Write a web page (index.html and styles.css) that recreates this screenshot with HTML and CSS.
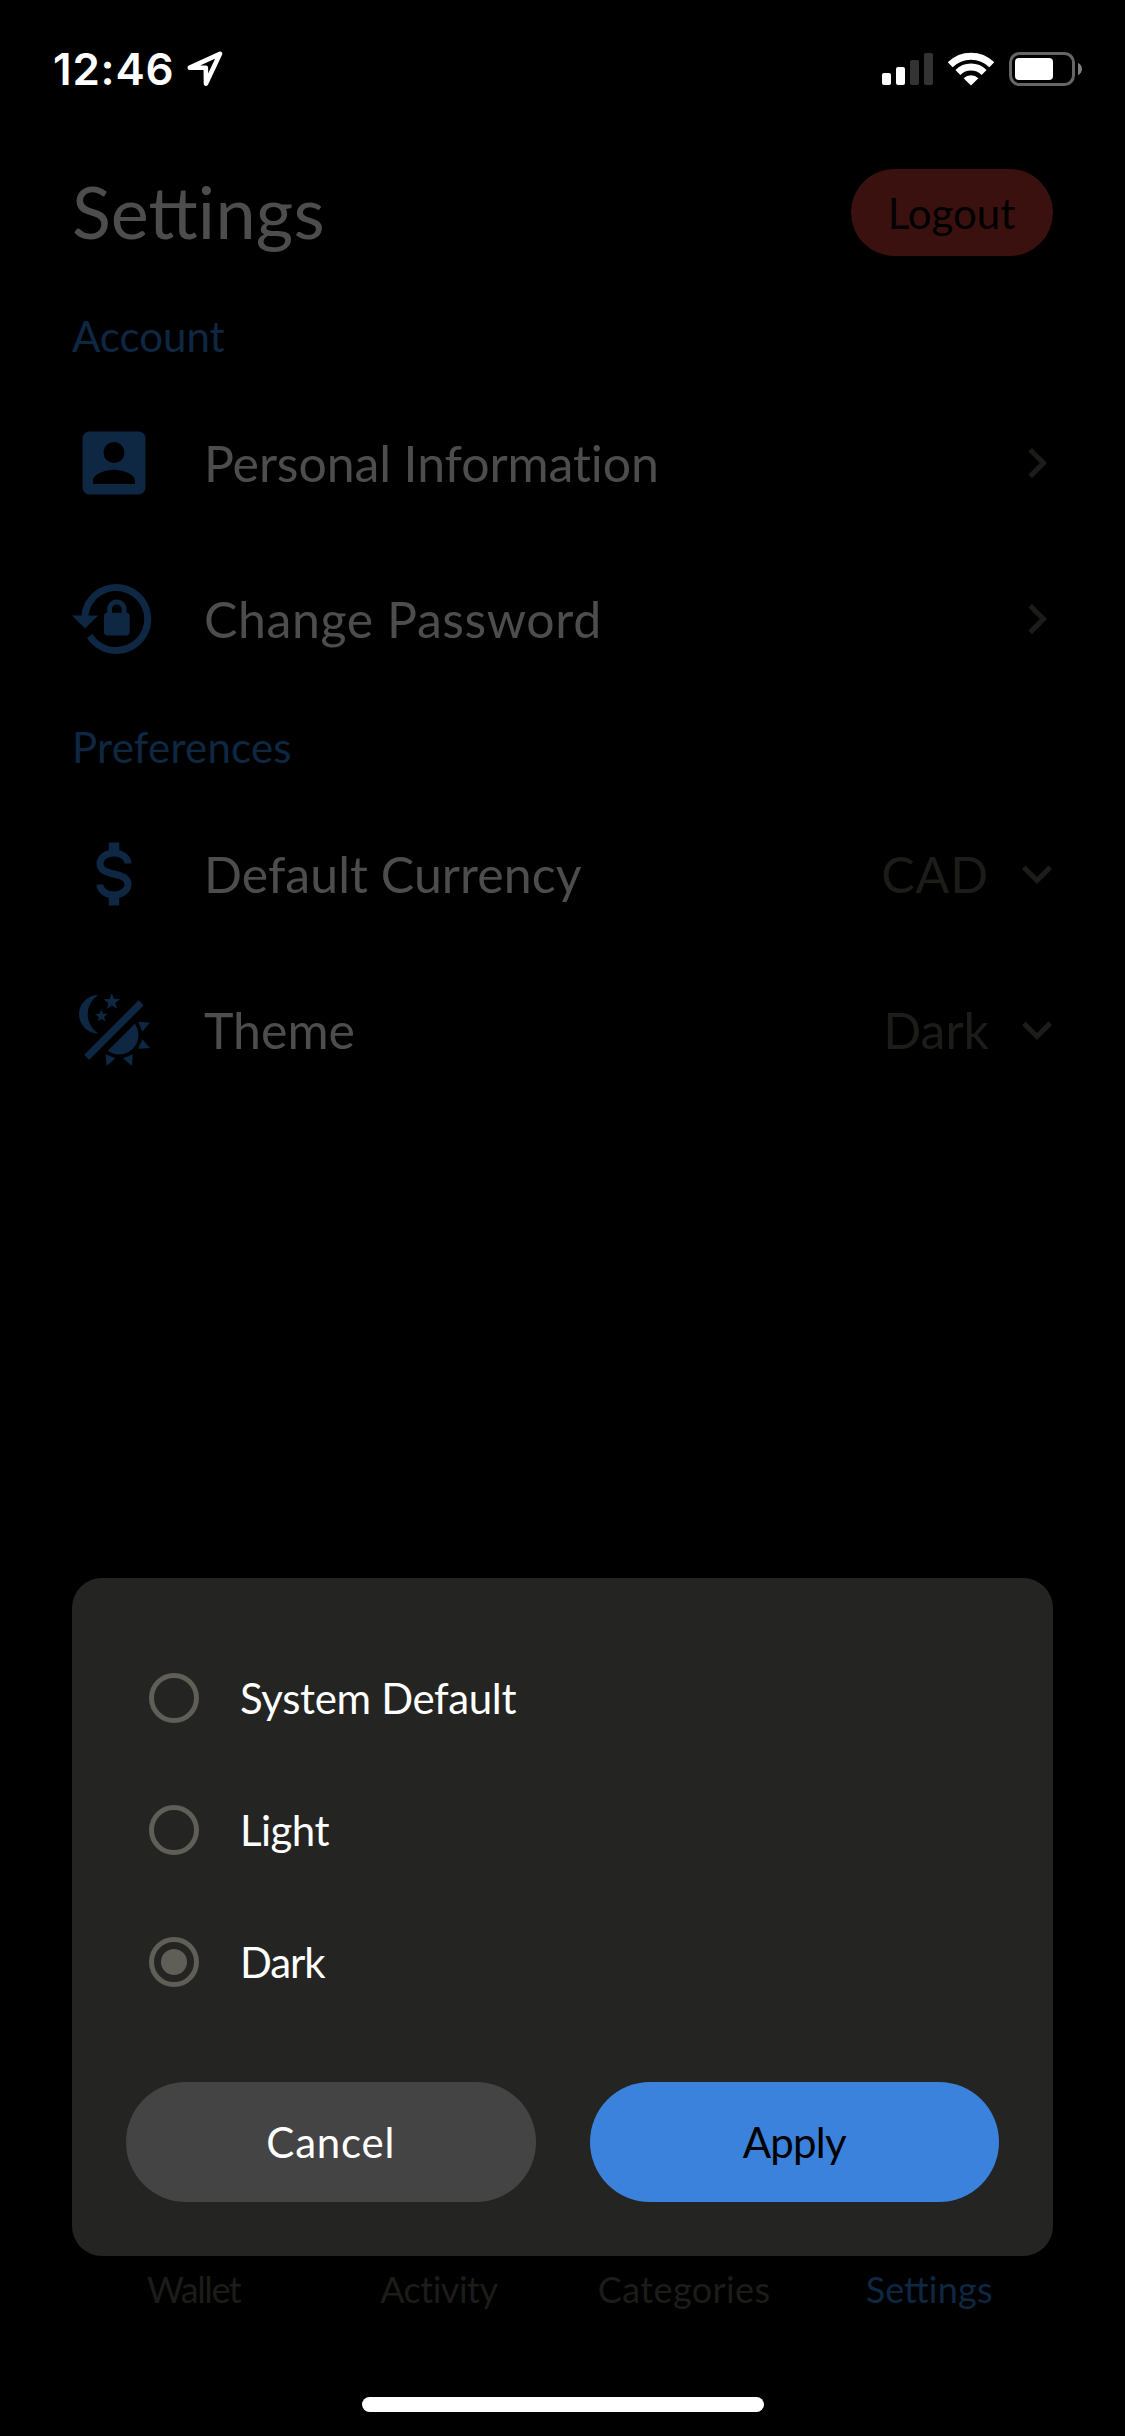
FILE: index.html
```html
<!DOCTYPE html>
<html lang="en">
<head>
<meta charset="utf-8">
<title>Settings</title>
<link rel="stylesheet" href="styles.css">
</head>
<body>
<div class="screen">
  <header class="status">
    <span class="clock">12:46</span>
    <svg class="location" width="36" height="36" viewBox="0 0 36 36"><path d="M2.8 16.6L33 2.8L19 32.6L18.8 16.8Z" fill="none" stroke="#fff" stroke-width="4.6" stroke-linejoin="round"/></svg>
    <div class="indicators">
      <svg width="51" height="32" viewBox="0 0 51 32"><g fill="#fff"><rect y="20" width="9" height="12" rx="2"/><rect x="14" y="14" width="9" height="18" rx="2"/></g><g fill="#333"><rect x="28" y="7" width="9" height="25" rx="2"/><rect x="42" width="9" height="32" rx="2"/></g></svg>
      <svg width="46" height="35" viewBox="0 0 46 35"><g fill="none" stroke="#fff" stroke-width="7"><path d="M2.2 12.8A29.4 29.4 0 0 1 43.8 12.8"/><path d="M9.9 20.5A18.5 18.5 0 0 1 36.1 20.5"/></g><path d="M23 33.5L15.6 26.2A10.5 10.5 0 0 1 30.4 26.2Z" fill="#fff"/></svg>
      <svg width="73" height="34" viewBox="0 0 73 34"><rect x="1.5" y="1.5" width="63" height="31" rx="9" fill="none" stroke="#666" stroke-width="3"/><rect x="6" y="6" width="38" height="22" rx="4" fill="#fff"/><path d="M69 11C74.3 13 74.3 21 69 23Z" fill="#808080"/></svg>
    </div>
  </header>

  <main class="page">
    <div class="heading">
      <h1 class="title">Sett<span class="plain">ings</span></h1>
      <button class="logout">Logout</button>
    </div>

    <h2 class="section account">Account</h2>
    <div class="row">
      <svg class="icon" viewBox="0 0 24 24"><path fill-rule="evenodd" d="M5 3H19A2 2 0 0 1 21 5V19A2 2 0 0 1 19 21H5A2 2 0 0 1 3 19V5A2 2 0 0 1 5 3ZM15 9A3 3 0 1 0 9 9A3 3 0 1 0 15 9ZM6 17V18H18V17C18 15 14 13.9 12 13.9S6 15 6 17Z"/></svg>
      <span class="label personal">Personal Information</span>
      <svg class="chevron" viewBox="0 0 24 24"><path d="M8.59 16.58L13.17 12L8.59 7.41L10 6L16 12L10 18Z"/></svg>
    </div>
    <div class="row">
      <svg class="icon" viewBox="0 0 24 24"><path d="M12.63,2C18.16,2 22.64,6.5 22.64,12C22.64,17.5 18.16,22 12.63,22C9.12,22 6.05,20.18 4.26,17.43L5.84,16.18C7.25,18.47 9.76,20 12.64,20A8,8 0 0,0 20.64,12A8,8 0 0,0 12.64,4C8.56,4 5.2,7.06 4.71,11H7.47L3.73,14.73L0,11H2.69C3.19,5.95 7.45,2 12.63,2M15.59,10.24C16.09,10.25 16.5,10.65 16.5,11.16V15.77C16.5,16.27 16.09,16.69 15.58,16.69H10.05C9.54,16.69 9.13,16.27 9.13,15.77V11.16C9.13,10.65 9.54,10.25 10.04,10.24V9.23C10.04,7.7 11.29,6.46 12.81,6.46C14.34,6.46 15.59,7.7 15.59,9.23V10.24M12.81,7.86C12.06,7.86 11.44,8.47 11.44,9.23V10.24H14.19V9.23C14.19,8.47 13.57,7.86 12.81,7.86Z"/></svg>
      <span class="label password">Change Password</span>
      <svg class="chevron" viewBox="0 0 24 24"><path d="M8.59 16.58L13.17 12L8.59 7.41L10 6L16 12L10 18Z"/></svg>
    </div>

    <h2 class="section preferences">Preferences</h2>
    <div class="row">
      <svg class="icon" viewBox="0 0 24 24"><path d="M7,15H9C9,16.08 10.37,17 12,17C13.63,17 15,16.08 15,15C15,13.9 13.96,13.5 11.76,12.97C9.64,12.44 7,11.78 7,9C7,7.21 8.47,5.69 10.5,5.18V3H13.5V5.18C15.53,5.69 17,7.21 17,9H15C15,7.92 13.63,7 12,7C10.37,7 9,7.92 9,9C9,10.1 10.04,10.5 12.24,11.03C14.36,11.56 17,12.22 17,15C17,16.79 15.53,18.31 13.5,18.82V21H10.5V18.82C8.47,18.31 7,16.79 7,15Z"/></svg>
      <span class="label currency">Default Currency</span>
      <span class="value code">CAD</span>
      <svg class="chevron" viewBox="0 0 24 24"><path d="M7.41 8.58L12 13.17L16.59 8.58L18 10L12 16L6 10Z"/></svg>
    </div>
    <div class="row">
      <svg class="icon" viewBox="0 0 24 24"><path d="M7.5,2C5.71,3.15 4.5,5.18 4.5,7.5C4.5,9.82 5.71,11.85 7.53,13C4.46,13 2,10.54 2,7.5A5.5,5.5 0 0,1 7.5,2M19.07,3.5L20.5,4.93L4.93,20.5L3.5,19.07L19.07,3.5M12.89,5.93L11.41,5L9.97,6L10.39,4.3L9,3.24L10.75,3.12L11.33,1.47L12,3.1L13.73,3.13L12.38,4.26L12.89,5.93M9.59,9.54L8.43,8.81L7.31,9.59L7.65,8.27L6.56,7.44L7.92,7.35L8.37,6.06L8.88,7.33L10.24,7.36L9.19,8.23L9.59,9.54M19,13.5A5.5,5.5 0 0,1 13.5,19C12.28,19 11.15,18.6 10.24,17.93L17.93,10.24C18.6,11.15 19,12.28 19,13.5M14.6,20.08L17.37,18.93L17.13,22.28L14.6,20.08M18.93,17.38L20.08,14.61L22.28,17.15L18.93,17.38M20.08,12.42L18.94,9.64L22.28,9.88L20.08,12.42M9.63,18.93L12.4,20.08L9.87,22.27L9.63,18.93Z"/></svg>
      <span class="label">Theme</span>
      <span class="value">Dark</span>
      <svg class="chevron" viewBox="0 0 24 24"><path d="M7.41 8.58L12 13.17L16.59 8.58L18 10L12 16L6 10Z"/></svg>
    </div>
  </main>

  <nav class="tabs">
    <span class="tab wallet">Wallet</span>
    <span class="tab activity">Activity</span>
    <span class="tab categories">Categories</span>
    <span class="tab active">Sett<span class="plain">ings</span></span>
  </nav>
  <div class="home"></div>

  <section class="dialog">
    <div class="option"><span class="radio"></span><span class="choice system">System Default</span></div>
    <div class="option"><span class="radio"></span><span class="choice light">Light</span></div>
    <div class="option"><span class="radio checked"></span><span class="choice dark">Dark</span></div>
    <div class="actions">
      <button class="button cancel">Cancel</button>
      <button class="button apply">Apply</button>
    </div>
  </section>
</div>
</body>
</html>
```
FILE: styles.css
```css
* { box-sizing: border-box; }

body { margin: 0; background: #000; }

.screen {
  position: relative;
  display: flex;
  flex-direction: column;
  width: 1125px;
  height: 2436px;
  overflow: hidden;
  background: #000;
  font-family: Lato, "Open Sans", sans-serif;
}

.screen svg { display: block; flex: none; }

.status {
  display: flex;
  align-items: center;
  height: 138px;
  padding: 0 43px 0 53px;
}

.clock {
  color: #fff;
  font: 600 44px/1 Inter, sans-serif;
  letter-spacing: 0.8px;
}

.location { margin-left: 12px; }

.indicators {
  display: flex;
  align-items: center;
  gap: 15px;
  margin-left: auto;
}

.page { padding: 31px 72px 0; }

.heading {
  display: flex;
  align-items: center;
  justify-content: space-between;
  height: 87px;
}

.title {
  margin: 0;
  padding-bottom: 3px;
  color: #4d4d4d;
  font-size: 72px;
  font-weight: 400;
  line-height: 80px;
}

/* Keeps the i out of the joined double t */
.plain { letter-spacing: 0.3px; }

.logout {
  width: 202px;
  height: 87px;
  padding: 0 1px 0 0;
  border: 0;
  border-radius: 44px;
  background: #3a110f;
  color: #000;
  font: 400 42px/50px Lato, sans-serif;
}

.section {
  margin: 20px 0 19px;
  color: #0e2742;
  font-size: 42px;
  font-weight: 400;
  line-height: 60px;
}

.account { margin-top: 50px; }
.preferences { letter-spacing: 0.2px; }

.row {
  display: flex;
  align-items: center;
  height: 156px;
}

.icon { width: 84px; height: 84px; fill: #0e2742; }

.label, .value {
  padding-bottom: 1px;
  font-size: 50px;
  line-height: 60px;
}

.label { flex: 1; margin-left: 48px; color: #4d4d4d; }
.value { color: #1c1c19; margin-right: 18px; }

.personal { letter-spacing: -0.1px; }
.password { letter-spacing: 0.6px; }
.currency { letter-spacing: 0.05px; }
.code { letter-spacing: 0.8px; }

.chevron { width: 60px; height: 60px; margin-right: -14px; fill: #1c1c19; }

.tabs {
  display: flex;
  margin-top: auto;
  padding: 0 73px 0 71px;
}

.tab {
  flex: 1 1 0;
  color: #1c1c19;
  font-size: 36px;
  line-height: 44px;
  text-align: center;
}

.wallet { letter-spacing: -1.4px; }
.activity { letter-spacing: -0.5px; }
.categories { letter-spacing: 0.4px; }
.active { color: #0e2742; }

.home {
  align-self: center;
  width: 402px;
  height: 15px;
  margin: 86px 0 24px;
  border-radius: 8px;
  background: #fff;
}

/* Theme picker floating over the page */
.dialog {
  position: absolute;
  top: 1578px;
  left: 72px;
  width: 981px;
  height: 678px;
  padding: 54px;
  border-radius: 30px;
  background: #242422;
}

.option {
  display: flex;
  align-items: center;
  gap: 41px;
  height: 132px;
  padding-left: 23px;
}

.radio {
  display: grid;
  place-items: center;
  width: 50px;
  height: 50px;
  border: 5px solid #5f5f57;
  border-radius: 50%;
}

.checked::after {
  content: "";
  width: 26px;
  height: 26px;
  border-radius: 50%;
  background: #5f5f57;
}

.choice {
  color: #fff;
  font-size: 42px;
  line-height: 50px;
}

.system { letter-spacing: -0.35px; }
.light { letter-spacing: -0.55px; }
.dark { letter-spacing: -1.1px; }

.actions {
  display: flex;
  gap: 54px;
  margin-top: 54px;
}

.button {
  flex: 1 1 0;
  height: 120px;
  padding: 0;
  border: 0;
  border-radius: 60px;
  font: 400 42px/50px Lato, sans-serif;
}

.cancel { background: #444; color: #fff; letter-spacing: 0.8px; }
.apply { background: #3b82dc; color: #000; letter-spacing: -0.8px; }
```
